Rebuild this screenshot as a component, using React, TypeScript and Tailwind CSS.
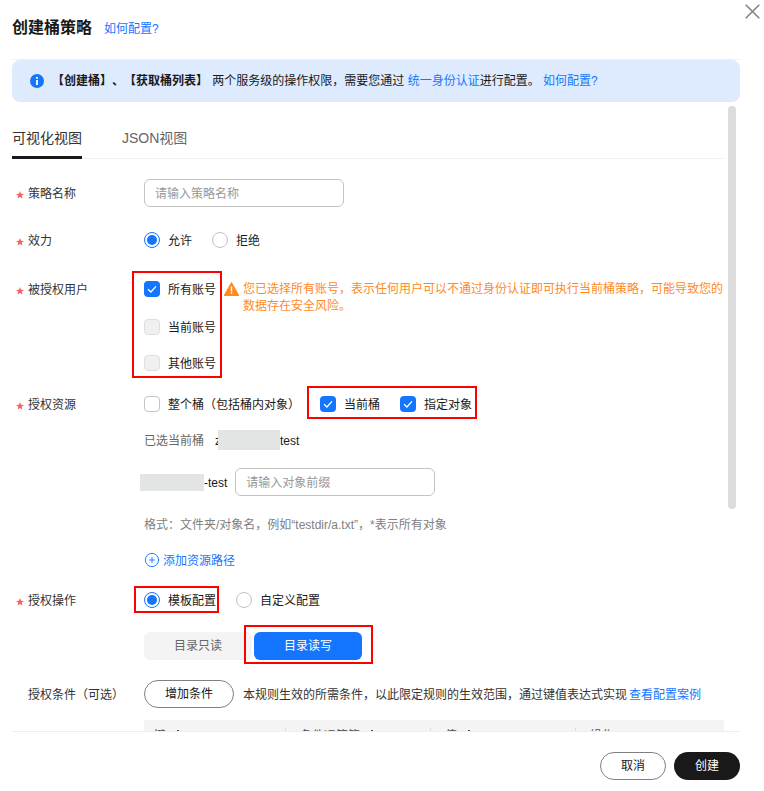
import { ChevronUp, CirclePlus } from 'lucide-react';
import type { ReactNode } from 'react';

function Check({ on, disabled }: { on?: boolean; disabled?: boolean }) {
  if (on) {
    return (
      <span className="flex size-4 shrink-0 items-center justify-center rounded-[4px] bg-[#1476ff]">
        <svg width="12" height="12" viewBox="0 0 12 12" fill="none">
          <path d="M2 6.2 4.9 9 10 3.4" stroke="#fff" strokeWidth="1.3" />
        </svg>
      </span>
    );
  }
  return (
    <span
      className={`size-4 shrink-0 rounded-[4px] border ${disabled ? 'border-[#dfdfdf] bg-[#f0f0f0]' : 'border-[#c2c2c2] bg-white'}`}
    />
  );
}

function Radio({ on, className }: { on?: boolean; className?: string }) {
  if (on) {
    return (
      <span className={`flex size-4 shrink-0 items-center justify-center rounded-full border border-[#1476ff] ${className || ''}`}>
        <span className="size-[10px] rounded-full bg-[#1476ff]" />
      </span>
    );
  }
  return <span className={`size-4 shrink-0 rounded-full border border-[#c2c2c2] ${className || ''}`} />;
}

// text inside a centered row sits 1px low in the design
function T({ className, children }: { className?: string; children: ReactNode }) {
  return <span className={`pt-0.5 ${className || ''}`}>{children}</span>;
}

function Row({ label, required, className, children }: { label: string; required?: boolean; className?: string; children: ReactNode }) {
  return (
    <div className={`flex ${className || ''}`}>
      <div className="flex h-7 w-[132px] shrink-0 items-center pl-1 text-[#333]">
        <span className="flex w-3 items-center pt-[3px]">
          {required && (
            <svg width="8" height="8" viewBox="0 0 10 10">
              <path d="M5 0l1.3 3.4 3.7.2-2.9 2.3 1 3.6L5 7.5 1.900 9.500l1-3.600L0 3.600l3.700-.2z" fill="#f4645f" />
            </svg>
          )}
        </span>
        <T>{label}</T>
      </div>
      <div className="min-w-0 flex-1">{children}</div>
    </div>
  );
}

function Redacted({ className }: { className: string }) {
  return <span className={`inline-block bg-[#e3e4e4] ${className}`} />;
}

export default function App() {
  const columns = [
    { name: '键', width: 'w-[141px]', sort: true },
    { name: '条件运算符', width: 'w-[145px]', sort: true },
    { name: '值', width: 'w-[145px]', sort: true },
    { name: '操作', width: 'w-[149px]', sort: false },
  ];

  return (
    <div className="relative flex h-[791px] w-[764px] flex-col overflow-hidden bg-white font-['Liberation_Sans','Noto_Sans_CJK_SC',sans-serif] text-[12px] leading-[17px] text-[#191919] [text-spacing-trim:space-all]">
      {/* header */}
      <div className="flex h-[54px] shrink-0 items-center pl-3">
        <h1 className="pt-0.5 text-[16px] font-bold leading-6">创建桶策略</h1>
        <a className="ml-3 pt-1 text-[#1476ff]">如何配置?</a>
      </div>
      <button className="absolute left-[745px] top-1">
        <svg width="15" height="15" viewBox="0 0 15 15" fill="none" className="block">
          <path d="M.7.7l13.6 13.6M14.3.7.7 14.3" stroke="#808080" strokeWidth="1.5" />
        </svg>
      </button>

      {/* alert */}
      <div className="ml-3 mr-6 mt-[5px] shrink-0 border-t border-[#f0f0f0]" />
      <div className="ml-3 mr-6 flex h-[42px] shrink-0 items-center rounded-lg bg-[#deebff] pl-[18px]">
        <svg width="14" height="14" viewBox="0 0 14 14" className="shrink-0">
          <circle cx="7" cy="7" r="7" fill="#1476ff" />
          <rect x="6.1" y="6" width="1.8" height="5" fill="#fff" />
          <rect x="6.1" y="3" width="1.8" height="1.8" fill="#fff" />
        </svg>
        <span className="ml-2 whitespace-nowrap">
          <b className="font-bold">【创建桶】、【获取桶列表】</b> <span className="ml-px">两个服务级的操作权限，需要您通过</span>{' '}
          <a className="text-[#1476ff]">统一身份认证</a>进行配置。 <a className="text-[#1476ff]">如何配置?</a>
        </span>
      </div>

      {/* body */}
      <div className="min-h-0 flex-1 overflow-hidden pl-3 pr-10">
        <div className="flex h-[57px] items-end border-b border-[#f0f0f0] text-[14px] leading-5">
          <div className="-mb-px h-[46px] w-[70px] border-b-[3px] border-[#191919] pt-[15px] text-[#333]">可视化视图</div>
          <div className="ml-10 h-[45px] pt-[15px] text-[#666]">JSON视图</div>
        </div>

        <Row label="策略名称" required className="mt-5">
          <div className="flex h-7 w-[200px] items-center rounded-md border border-[#c2c2c2] px-[10px] pt-0.5 text-[#999]">请输入策略名称</div>
        </Row>

        <Row label="效力" required className="mt-[19px]">
          <div className="flex h-7 items-center">
            <Radio on />
            <T className="ml-2">允许</T>
            <Radio className="ml-5" />
            <T className="ml-2">拒绝</T>
          </div>
        </Row>

        <Row label="被授权用户" required className="mt-[21px]">
          <div className="flex">
            <div className="flex w-20 shrink-0 flex-col">
              <div className="flex h-7 items-center"><Check on /><T className="ml-2">所有账号</T></div>
              <div className="mt-[10px] flex h-7 items-center"><Check disabled /><T className="ml-2">当前账号</T></div>
              <div className="mt-2 flex h-7 items-center"><Check disabled /><T className="ml-2">其他账号</T></div>
            </div>
            <div className="flex pt-[6px] text-[#ff8a1f]">
              <svg width="15" height="14" viewBox="0 0 15 14" className="mt-px shrink-0">
                <path d="M7.5.5 14.8 13.5H.2Z" fill="#ff8a1f" stroke="#ff8a1f" strokeLinejoin="round" />
                <rect x="6.8" y="4.5" width="1.4" height="5" fill="#fff" />
                <rect x="6.8" y="10.3" width="1.4" height="1.5" fill="#fff" />
              </svg>
              <p className="ml-1 w-[481px]">您已选择所有账号，表示任何用户可以不通过身份认证即可执行当前桶策略，可能导致您的数据存在安全风险。</p>
            </div>
          </div>
        </Row>

        <Row label="授权资源" required className="mt-[13px]">
          <div className="flex h-7 items-center">
            <Check />
            <T className="ml-2 w-[152px]">整个桶（包括桶内对象）</T>
            <Check on />
            <T className="ml-2 w-[56px]">当前桶</T>
            <Check on />
            <T className="ml-2">指定对象</T>
          </div>
          <div className="mt-2 flex h-7 items-center">
            <T className="text-[#666]">已选当前桶</T>
            <T className="ml-[11px]">z</T>
            <Redacted className="-ml-[3px] h-5 w-[62px]" />
            <T>test</T>
          </div>
          <div className="-ml-1 mt-[14px] flex h-7 items-center">
            <Redacted className="h-[17px] w-16" />
            <T>-test</T>
            <div className="ml-2 flex h-7 w-[200px] items-center rounded-md border border-[#c2c2c2] px-[10px] pt-0.5 text-[#999]">请输入对象前缀</div>
          </div>
          <div className="mt-[14px] flex h-7 items-center pt-0.5 text-[#808080]">格式：文件夹/对象名，例如“testdir/a.txt”，*表示所有对象</div>
          <div className="mt-2 flex h-7 items-center text-[#1476ff]">
            <CirclePlus size={16} strokeWidth={1.4} />
            <T className="ml-[3px]">添加资源路径</T>
          </div>
        </Row>

        <Row label="授权操作" required className="mt-3">
          <div className="flex h-7 items-center">
            <Radio on />
            <T className="ml-2">模板配置</T>
            <Radio className="ml-5" />
            <T className="ml-2">自定义配置</T>
          </div>
          <div className="mt-[18px] flex h-7 gap-0.5">
            <div className="flex w-[108px] items-center justify-center rounded-md bg-[#f4f4f4] text-[#666]">目录只读</div>
            <div className="flex w-[108px] items-center justify-center rounded-md bg-[#1476ff] text-white">目录读写</div>
          </div>
        </Row>

        <Row label="授权条件（可选）" className="mt-5">
          <div className="flex h-7 items-center whitespace-nowrap">
            <button className="h-7 w-[90px] rounded-full border border-[#808080]">增加条件</button>
            <T className="ml-[9px] text-[#333]">本规则生效的所需条件，以此限定规则的生效范围，通过键值表达式实现</T>
            <T className="ml-0.5 text-[#1476ff]">查看配置案例</T>
          </div>
          <div className="mt-3 flex h-8 items-center bg-[#f4f4f4] text-[#4d4d4d]">
            {columns.map((col, i) => (
              <div key={col.name} className={`flex h-4 items-center ${col.width} ${i > 0 ? 'border-l border-[#dcdcdc] pl-[14px]' : 'pl-[10px]'}`}>
                {col.name}
                {col.sort && <ChevronUp size={16} strokeWidth={1.5} className="mb-2 ml-1" />}
              </div>
            ))}
          </div>
        </Row>
      </div>

      {/* scrollbar */}
      <div className="absolute left-[728px] top-[106px] h-[403px] w-2 rounded bg-[#dcdcdc]" />

      {/* footer */}
      <div className="ml-3 mr-6 flex h-[60px] shrink-0 items-start justify-end gap-2 border-t border-[#eeeeee] pt-5">
        <button className="h-7 w-[66px] rounded-full border border-[#808080] bg-white">取消</button>
        <button className="h-7 w-[66px] rounded-full bg-[#191919] text-white">创建</button>
      </div>

      {/* red annotation boxes */}
      <div className="pointer-events-none absolute left-[132px] top-[271px] h-[107px] w-[90px] border-2 border-[#f00]" />
      <div className="pointer-events-none absolute left-[307px] top-[386px] h-[33px] w-[170px] border-2 border-[#f00]" />
      <div className="pointer-events-none absolute left-[134px] top-[586px] h-[27px] w-[85px] border-2 border-[#f00]" />
      <div className="pointer-events-none absolute left-[244px] top-[625px] h-[39px] w-[129px] border-2 border-[#f00]" />
    </div>
  );
}
